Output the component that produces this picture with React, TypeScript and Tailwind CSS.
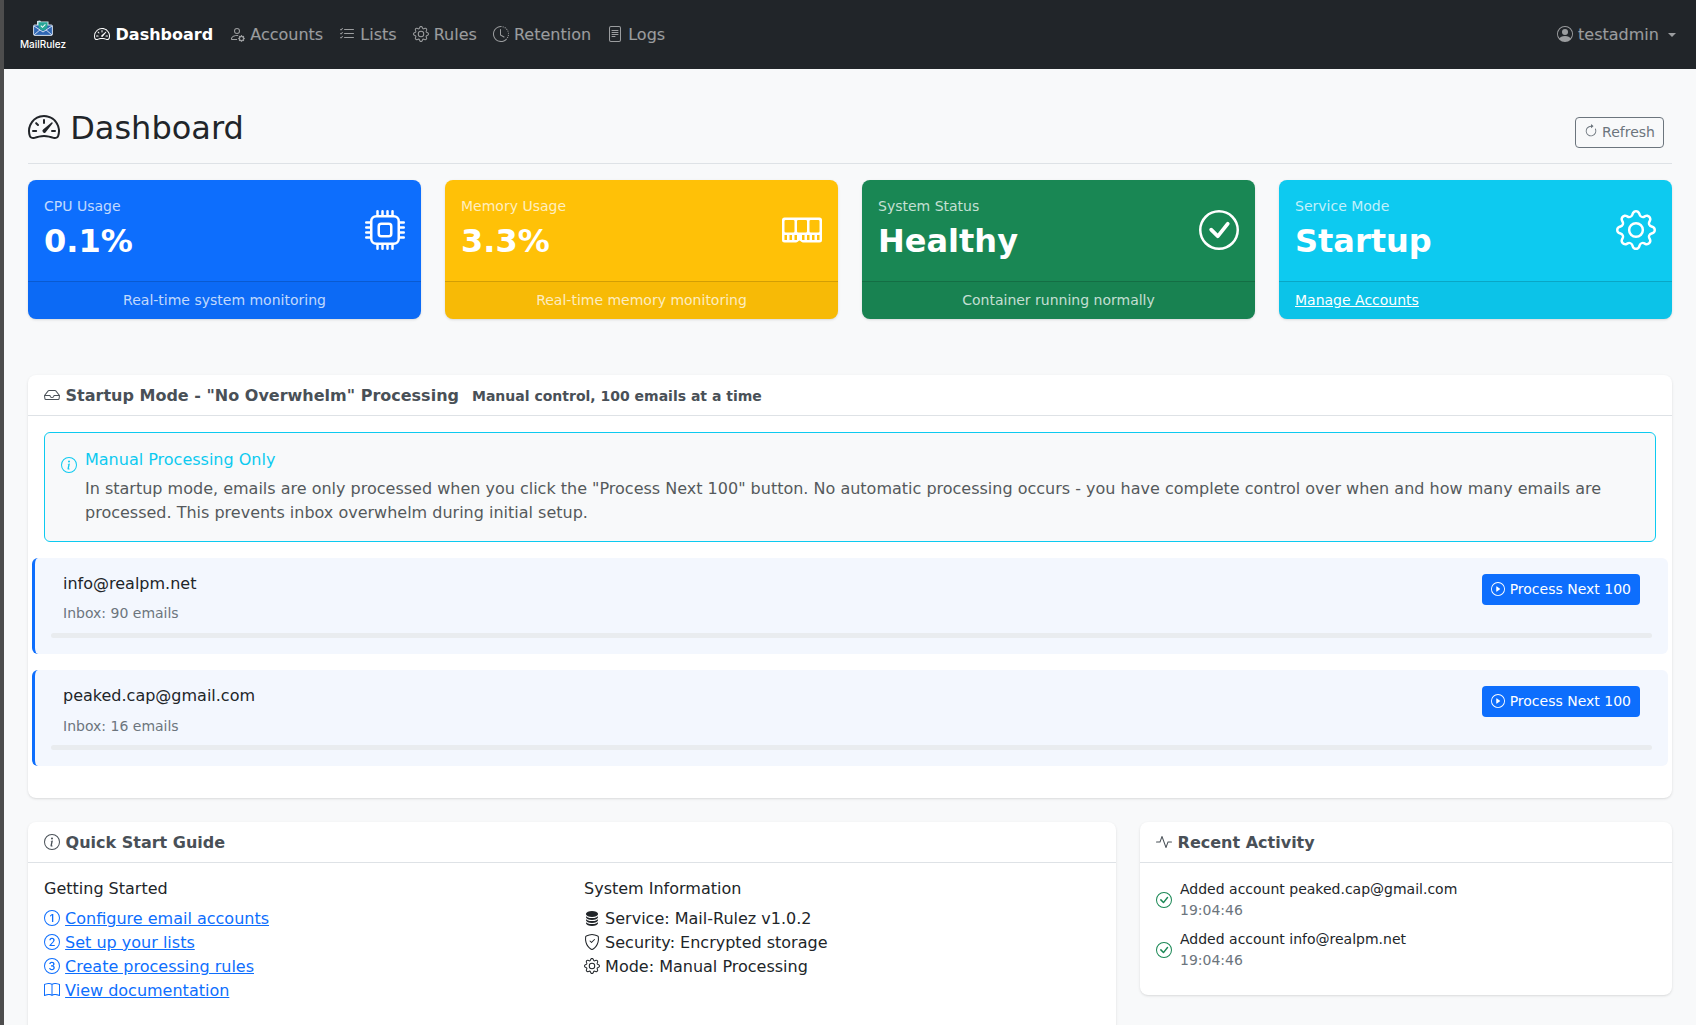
import {
  BsSpeedometer2, BsPersonGear, BsListCheck, BsGear, BsClockHistory, BsFileText, BsPersonCircle,
  BsArrowClockwise, BsCpu, BsMemory, BsCheckCircle, BsInbox, BsInfoCircle, BsPlayCircle,
  Bs1Circle, Bs2Circle, Bs3Circle, BsBook, BsDatabaseFill, BsShieldCheck, BsActivity,
} from 'react-icons/bs';
import type { IconType } from 'react-icons';

const bi = 'inline align-[-0.125em]';

const navLinks: { label: string; icon: IconType; active?: boolean }[] = [
  { label: 'Dashboard', icon: BsSpeedometer2, active: true },
  { label: 'Accounts', icon: BsPersonGear },
  { label: 'Lists', icon: BsListCheck },
  { label: 'Rules', icon: BsGear },
  { label: 'Retention', icon: BsClockHistory },
  { label: 'Logs', icon: BsFileText },
];

const stats = [
  { label: 'CPU Usage', value: '0.1%', icon: BsCpu, bg: 'bg-[#0d6efd]', foot: 'Real-time system monitoring' },
  { label: 'Memory Usage', value: '3.3%', icon: BsMemory, bg: 'bg-[#ffc107]', foot: 'Real-time memory monitoring' },
  { label: 'System Status', value: 'Healthy', icon: BsCheckCircle, bg: 'bg-[#198754]', foot: 'Container running normally' },
  { label: 'Service Mode', value: 'Startup', icon: BsGear, bg: 'bg-[#0dcaf0]', link: 'Manage Accounts' },
];

const accounts = [
  { email: 'info@realpm.net', count: 90 },
  { email: 'peaked.cap@gmail.com', count: 16 },
];

const guide = [
  { label: 'Configure email accounts', icon: Bs1Circle },
  { label: 'Set up your lists', icon: Bs2Circle },
  { label: 'Create processing rules', icon: Bs3Circle },
  { label: 'View documentation', icon: BsBook },
];

const sysInfo = [
  { label: 'Service: Mail-Rulez v1.0.2', icon: BsDatabaseFill },
  { label: 'Security: Encrypted storage', icon: BsShieldCheck },
  { label: 'Mode: Manual Processing', icon: BsGear },
];

const activity = ['Added account peaked.cap@gmail.com', 'Added account info@realpm.net'];

function Logo() {
  return (
    <a href="#" className="flex w-[54px] flex-col items-center mr-4">
      <svg viewBox="0 0 20 16" className="h-[16px] w-[20px]">
        <path d="M4 5 V1 L7 .5 L8 1.5 L15.5 1.5 V5 Z" fill="#cfe3ea" />
        <rect x=".6" y="5" width="18.8" height="10.4" rx="1" fill="#2f66b3" stroke="#e6edf6" strokeWidth=".9" />
        <path d="M1 6 L10 12 L19 6 M1 15 L7 9.8 M19 15 L13 9.8" fill="none" stroke="#e6edf6" strokeWidth=".9" />
        <path d="M5.5 2.2 H14.5 V6.5 C14.5 8.6 12 10 10 10.8 C8 10 5.5 8.6 5.5 6.5 Z" fill="#27a596" />
        <path d="M7.8 5.6 L9.5 7.3 L12.4 4.4" fill="none" stroke="#f2fbfa" strokeWidth="1.1" />
      </svg>
      <span className="mt-[2px] font-['Inter',sans-serif] text-[10px] leading-[12px] font-medium text-white">MailRulez</span>
    </a>
  );
}

function CardHeader({ icon: Icon, title, note }: { icon: IconType; title: string; note?: string }) {
  return (
    <div className="h-[41px] border-b border-[#dee2e6] px-4 pt-[9px] pb-[7px] leading-6 font-bold text-[#495057]">
      <Icon className={bi} /> {title}
      {note && <span className="ml-[13px] text-sm">{note}</span>}
    </div>
  );
}

export default function App() {
  return (
    <div className="h-screen overflow-hidden border-l-4 border-[#4d4d4d] bg-[#f8f9fa] font-['DejaVu_Sans',sans-serif] text-base text-[#212529]">
      <nav className="flex h-[69px] items-center justify-between bg-[#212529] pl-3 pr-3">
        <div className="flex items-center">
          <Logo />
          {navLinks.map(({ label, icon: Icon, active }) => (
            <a key={label} href="#" className={active ? 'px-2 leading-6 font-bold text-white' : 'px-2 leading-6 text-white/55'}>
              <Icon className={bi} /> {label}
            </a>
          ))}
        </div>
        <a href="#" className="px-2 leading-6 text-white/55">
          <BsPersonCircle className={bi} /> testadmin{' '}
          <span className="ml-[4px] inline-block align-[3px] border-x-[4.8px] border-t-[4.8px] border-x-transparent border-t-white/55" />
        </a>
      </nav>

      <main className="px-6">
        <div className="mb-4 mt-10 flex items-center justify-between border-b border-[#dee2e6] pb-2">
          <h2 className="mb-2 text-[32px] leading-[38.4px] font-normal">
            <BsSpeedometer2 className={bi} /> Dashboard
          </h2>
          <button className="mr-2 h-[31px] rounded border border-[#6c757d] px-2 text-sm leading-[21px] text-[#6c757d]">
            <BsArrowClockwise className={bi} /> Refresh
          </button>
        </div>

        <div className="mb-14 grid grid-cols-4 gap-6">
          {stats.map(({ label, value, icon: Icon, bg, foot, link }) => (
            <div key={label} className={`${bg} overflow-hidden rounded-lg text-white shadow-sm`}>
              <div className="flex h-[101px] items-center justify-between p-4">
                <div>
                  <div className="text-sm leading-[21px] text-white/75">{label}</div>
                  <div className="text-[32px] leading-[48px] font-bold">{value}</div>
                </div>
                <Icon className="mb-[2px] text-[40px]" />
              </div>
              <div className={link ? 'border-t border-black/15 bg-black/[0.03] px-4 py-2 text-sm leading-[21px]' : 'border-t border-black/15 bg-black/[0.03] px-4 py-2 text-center text-sm leading-[21px] text-white/75'}>
                {link ? <a href="#" className="underline">{link}</a> : foot}
              </div>
            </div>
          ))}
        </div>

        <section className="mb-6 rounded-lg bg-white shadow-sm">
          <CardHeader icon={BsInbox} title={'Startup Mode - "No Overwhelm" Processing'} note="Manual control, 100 emails at a time" />
          <div className="p-4">
            <div className="mb-4 flex rounded-md border border-[#0dcaf0] bg-[#f8f9fa] p-4">
              <BsInfoCircle className="mr-2 mt-2 shrink-0 text-[#0dcaf0]" />
              <div>
                <h6 className="mb-[7.3px] pt-px leading-[19.2px] text-[#0dcaf0]">Manual Processing Only</h6>
                <p className="leading-6 text-[#55595c]">
                  In startup mode, emails are only processed when you click the "Process Next 100" button. No automatic processing occurs - you have complete control over when and how many emails are processed. This prevents inbox overwhelm during initial setup.
                </p>
              </div>
            </div>
            {accounts.map((a) => (
              <div key={a.email} className="-mx-3 mb-4 rounded-md border-l-[3px] border-[#0d6efd] bg-[#f3f7fe] p-4">
                <div className="flex items-start justify-between px-3">
                  <div>
                    <h6 className="mb-[8.3px] leading-[19.2px]">{a.email}</h6>
                    <div className="text-sm leading-6 text-[#6c757d]">Inbox: {a.count} emails</div>
                  </div>
                  <button className="h-[31px] rounded bg-[#0d6efd] px-[9px] text-sm leading-[21px] text-white">
                    <BsPlayCircle className={bi} /> Process Next 100
                  </button>
                </div>
                <div className="mt-[7.7px] h-[5px] rounded bg-[#e9ecef]" />
              </div>
            ))}
          </div>
        </section>

        <div className="grid grid-cols-3 items-start gap-6">
          <section className="col-span-2 rounded-lg bg-white shadow-sm">
            <CardHeader icon={BsInfoCircle} title="Quick Start Guide" />
            <div className="grid grid-cols-2 gap-6 p-4">
              <div>
                <h6 className="mb-[8.4px] leading-[19.2px]">Getting Started</h6>
                <ul className="mb-4 leading-6 text-[#0d6efd]">
                  {guide.map(({ label, icon: Icon }) => (
                    <li key={label}>
                      <Icon className={bi} /> <a href="#" className="underline">{label}</a>
                    </li>
                  ))}
                </ul>
              </div>
              <div>
                <h6 className="mb-[8.4px] leading-[19.2px]">System Information</h6>
                <ul className="leading-6">
                  {sysInfo.map(({ label, icon: Icon }) => (
                    <li key={label}>
                      <Icon className={bi} /> {label}
                    </li>
                  ))}
                </ul>
              </div>
            </div>
          </section>
          <section className="rounded-lg bg-white shadow-sm">
            <CardHeader icon={BsActivity} title="Recent Activity" />
            <div className="p-4 text-sm">
              {activity.map((text) => (
                <div key={text} className="mb-2 flex items-center">
                  <BsCheckCircle className="mr-2 shrink-0 text-base text-[#198754]" />
                  <div className="leading-[21px]">
                    <div>{text}</div>
                    <div className="text-[#6c757d]">19:04:46</div>
                  </div>
                </div>
              ))}
            </div>
          </section>
        </div>
      </main>
    </div>
  );
}
